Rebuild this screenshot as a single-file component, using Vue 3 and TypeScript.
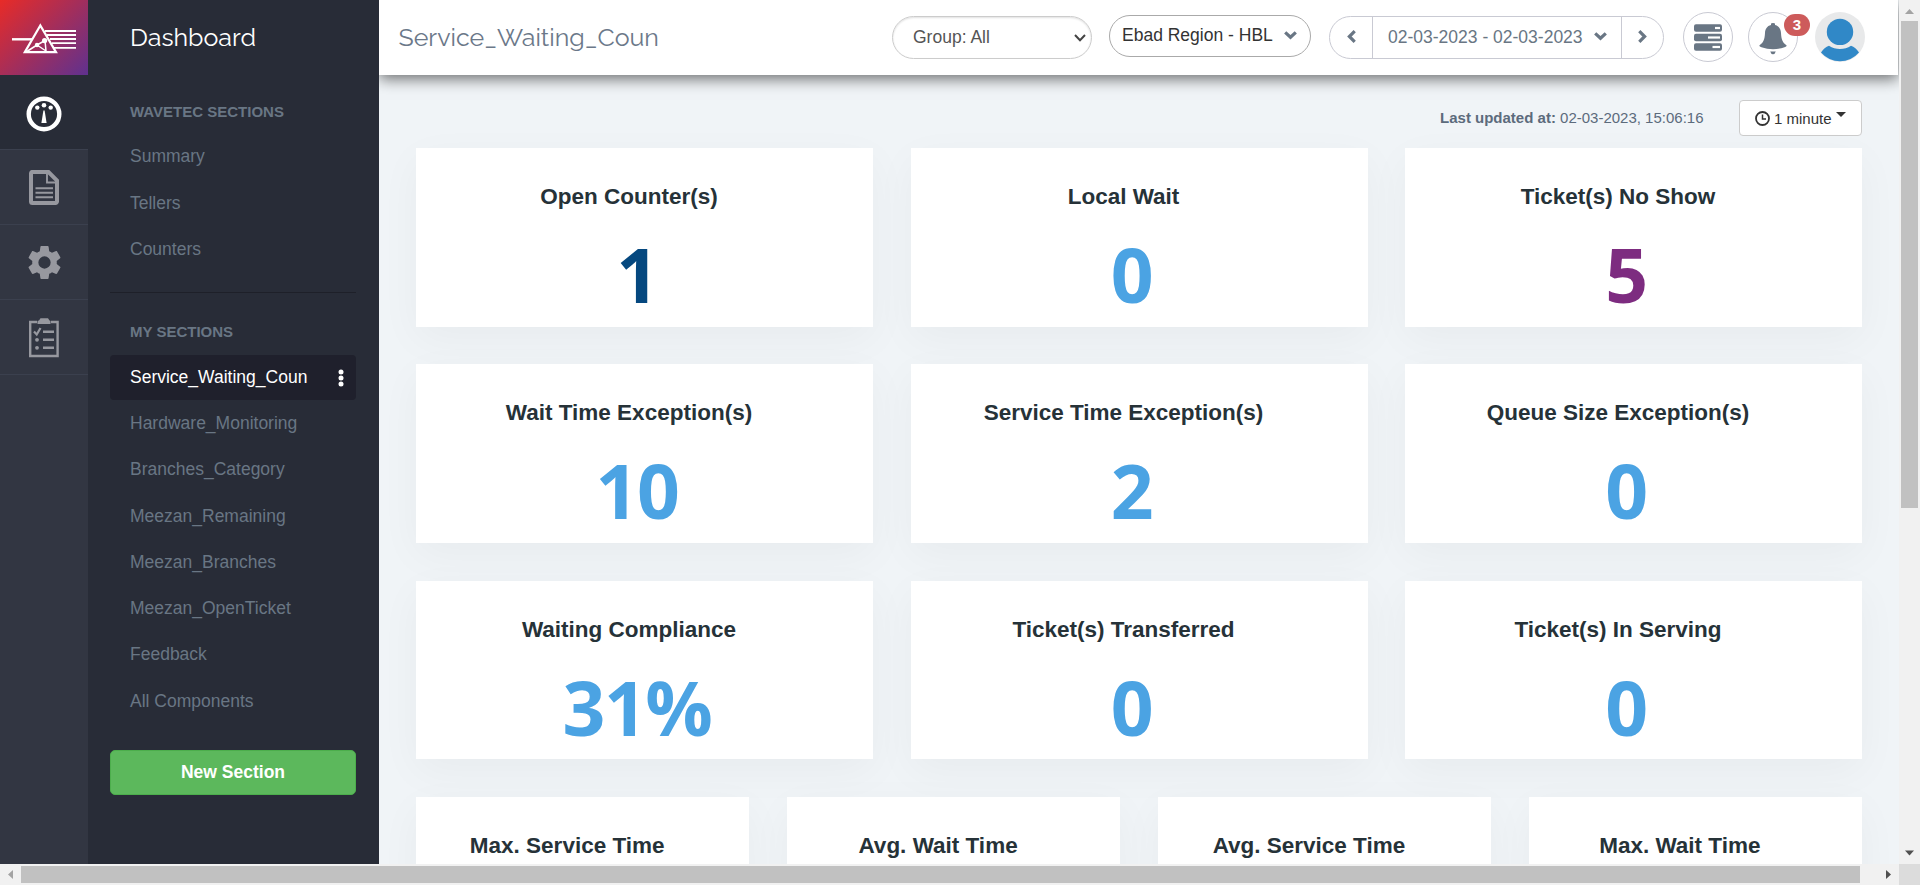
<script setup lang="ts">
interface Stat {
  label: string
  value: string
  tone?: string
}

const systemSections: string[] = ['Summary', 'Tellers', 'Counters']
const mySections: string[] = [
  'Service_Waiting_Coun',
  'Hardware_Monitoring',
  'Branches_Category',
  'Meezan_Remaining',
  'Meezan_Branches',
  'Meezan_OpenTicket',
  'Feedback',
  'All Components',
]
const activeSection = 'Service_Waiting_Coun'

const stats: Stat[] = [
  { label: 'Open Counter(s)', value: '1', tone: 'navy' },
  { label: 'Local Wait', value: '0' },
  { label: 'Ticket(s) No Show', value: '5', tone: 'purple' },
  { label: 'Wait Time Exception(s)', value: '10' },
  { label: 'Service Time Exception(s)', value: '2' },
  { label: 'Queue Size Exception(s)', value: '0' },
  { label: 'Waiting Compliance', value: '31%' },
  { label: 'Ticket(s) Transferred', value: '0' },
  { label: 'Ticket(s) In Serving', value: '0' },
]
const times: string[] = ['Max. Service Time', 'Avg. Wait Time', 'Avg. Service Time', 'Max. Wait Time']
</script>

<template>
  <div class="window">
    <div class="page">
      <nav class="rail">
        <div class="brand">
          <svg width="88" height="75" viewBox="0 0 88 75" fill="none" stroke="#fff">
            <path d="M12 39.3H32" stroke-width="2.4" />
            <path d="M45 31H76M47 35H76M50 39H76M52 43.2H76M54 47.8H76" stroke-width="1.8" />
            <path d="M40.3 25.5L24.8 52.2H56Z" stroke-width="2.2" />
            <path d="M26 52L37 45L45 40.5L46 51M37 45L46 51" stroke-width="1.5" />
            <circle cx="37" cy="45" r="2.2" fill="#fff" stroke="none" />
            <circle cx="44.6" cy="40.6" r="2.6" fill="#fff" stroke="none" />
          </svg>
        </div>
        <div class="rail-item current">
          <svg width="36" height="36" viewBox="0 0 36 36" fill="#fff">
            <circle cx="18" cy="18" r="15.3" fill="none" stroke="#fff" stroke-width="4.4" />
            <circle cx="11.3" cy="11.6" r="2.2" /><circle cx="18" cy="9.2" r="2.3" /><circle cx="24.7" cy="11.6" r="2.2" />
            <path d="M17.4 14.5h1.2L20.6 27h-5.2z" />
          </svg>
        </div>
        <div class="rail-item">
          <svg width="30" height="35" viewBox="0 0 30 35" fill="none" stroke="#97989f">
            <path d="M4 2H19.5L28 10.500V31.500A1.500 1.500 0 0 1 26.500 33H3.500A1.500 1.500 0 0 1 2 31.500V3.500A1.500 1.500 0 0 1 4 2Z" stroke-width="4" />
            <path d="M18 2V12.500H28M6.500 18.300H24M6.500 22.800H24M6.500 27.200H24" stroke-width="1.900" />
          </svg>
        </div>
        <div class="rail-item">
          <svg width="41" height="41" viewBox="0 0 24 24" fill="#97989f">
            <path d="M19.140 12.940c.04-.3.060-.610.060-.940 0-.320-.020-.640-.070-.940l2.030-1.580c.180-.140.230-.410.120-.610l-1.920-3.320c-.120-.220-.370-.290-.590-.220l-2.390.960c-.500-.380-1.030-.700-1.620-.940L14.400 2.810c-.040-.240-.240-.410-.480-.410h-3.840c-.240 0-.430.170-.470.410L9.250 5.350C8.660 5.590 8.120 5.920 7.630 6.290L5.240 5.330c-.220-.080-.470 0-.590.220L2.740 8.870c-.120.210-.080.470.120.610l2.030 1.580c-.050.300-.090.630-.090.940s.020.640.070.940l-2.030 1.580c-.180.140-.230.410-.120.610l1.920 3.320c.120.220.370.290.590.220l2.390-.960c.500.380 1.030.700 1.620.940l.360 2.540c.050.240.240.410.480.410h3.840c.240 0 .440-.170.470-.410l.360-2.540c.590-.240 1.130-.560 1.620-.940l2.390.960c.220.080.470 0 .590-.220l1.920-3.320c.120-.220.070-.470-.120-.610L19.140 12.940zM12 15.600a3.600 3.600 0 1 1 0-7.200 3.600 3.600 0 0 1 0 7.200z" />
          </svg>
        </div>
        <div class="rail-item">
          <svg width="30" height="40" viewBox="0 0 30 40" fill="none" stroke="#97989f">
            <path d="M8 4H1.200V38H28.600V4H22" stroke-width="2.400" />
            <path d="M8.500 6V3.500Q8.500 2.500 10 2.500L11.500 .3H19L20.500 2.500Q21.500 2.500 21.500 3.500V6Z" fill="#97989f" stroke="none" />
            <path d="M5 13.500L7.700 16.500L11.500 10" stroke-width="2.200" />
            <path d="M14 13.800H25M14 21.800H25M14 29.800H25" stroke-width="2.400" />
            <circle cx="8" cy="21.800" r="1.900" fill="#97989f" stroke="none" /><circle cx="8" cy="29.800" r="1.900" fill="#97989f" stroke="none" />
          </svg>
        </div>
      </nav>

      <aside class="sidebar">
        <h1>Dashboard</h1>
        <h2>WAVETEC SECTIONS</h2>
        <ul>
          <li v-for="name in systemSections" :key="name">{{ name }}</li>
        </ul>
        <hr />
        <h2 class="mine">MY SECTIONS</h2>
        <ul>
          <li v-for="name in mySections" :key="name" :class="{ active: name === activeSection }">
            <span>{{ name }}</span>
            <svg v-if="name === activeSection" width="6" height="18" viewBox="0 0 6 18" fill="#fff">
              <circle cx="3" cy="3" r="2.500" /><circle cx="3" cy="9" r="2.500" /><circle cx="3" cy="15" r="2.500" />
            </svg>
          </li>
        </ul>
        <button class="new-section">New Section</button>
      </aside>

      <main>
        <header>
          <div class="title">Service_Waiting_Coun</div>
          <div class="pill group">
            <span>Group: All</span>
            <svg width="12" height="8" viewBox="0 0 12 8" fill="none" stroke="#444" stroke-width="2"><path d="M1 1L6 6.200L11 1" /></svg>
          </div>
          <div class="pill region">
            <span>Ebad Region - HBL</span>
            <svg width="13" height="9" viewBox="0 0 13 9" fill="none" stroke="#697684" stroke-width="3.200"><path d="M1.200 1.300L6.500 6.200L11.800 1.300" /></svg>
          </div>
          <div class="pill range">
            <div class="step prev">
              <svg width="9" height="13" viewBox="0 0 9 13" fill="none" stroke="#697684" stroke-width="3.200"><path d="M7.700 1.200L2.400 6.500L7.700 11.800" /></svg>
            </div>
            <div class="dates">
              <span>02-03-2023 - 02-03-2023</span>
              <svg width="13" height="9" viewBox="0 0 13 9" fill="none" stroke="#697684" stroke-width="3.200"><path d="M1.200 1.300L6.500 6.200L11.800 1.300" /></svg>
            </div>
            <div class="step next">
              <svg width="9" height="13" viewBox="0 0 9 13" fill="none" stroke="#697684" stroke-width="3.200"><path d="M1.300 1.200L6.600 6.500L1.300 11.800" /></svg>
            </div>
          </div>
          <div class="round">
            <svg width="28" height="27" viewBox="0 0 28 27">
              <g fill="#697684"><rect width="28" height="7.400" y="0.300" rx="2" /><rect width="28" height="7.400" y="9.800" rx="2" /><rect width="28" height="7.400" y="19.300" rx="2" /></g>
              <g fill="#fff"><rect x="21" y="2.900" width="5" height="2.200" /><rect x="14" y="12.400" width="12" height="2.200" /><rect x="18.500" y="21.900" width="7.500" height="2.200" /></g>
            </svg>
          </div>
          <div class="round bell">
            <svg width="28" height="32" viewBox="0 0 28 32" fill="#697684">
              <path d="M12 2V.8Q12 0 14 0T16 .8V2C20 3 21.800 6 22 10C22.300 16.500 23.500 19.500 27.700 22.500Q27.700 23.500 25.500 24.300Q20 26.200 14 26.200T2.500 24.300Q.3 23.500 .3 22.500C4.500 19.500 5.700 16.500 6 10C6.200 6 8 3 12 2ZM11.200 28.600H16.800Q16 31.300 14 31.300T11.200 28.600Z" />
            </svg>
            <b class="badge">3</b>
          </div>
          <svg class="avatar" width="50" height="50" viewBox="0 0 50 50">
            <circle cx="25" cy="25" r="25" fill="#e8e9ea" />
            <g fill="#3088c7"><ellipse cx="25" cy="19.900" rx="13.200" ry="13.200" /><path d="M6 40.500C8 37.500 11 34.500 14 33.700Q19 37 25 37T36 33.700C39 34.500 42 37.500 44 40.500A25 25 0 0 1 6 40.500Z" /></g>
          </svg>
        </header>

        <div class="status">
          <p><b>Last updated at:</b> 02-03-2023, 15:06:16</p>
          <button class="refresh">
            <svg width="15" height="15" viewBox="0 0 15 15" fill="none" stroke="#333"><circle cx="7.500" cy="7.500" r="6.500" stroke-width="1.800" /><path d="M7.500 3.500V8H11" stroke-width="1.500" /></svg>
            <span>1 minute</span>
            <i class="caret"></i>
          </button>
        </div>

        <section class="cards">
          <article v-for="s in stats" :key="s.label" class="card">
            <h3>{{ s.label }}</h3>
            <div class="value" :class="s.tone">{{ s.value }}</div>
          </article>
        </section>
        <section class="cards four">
          <article v-for="t in times" :key="t" class="card">
            <h3>{{ t }}</h3>
          </article>
        </section>
      </main>
    </div>

    <div class="vbar">
      <svg width="21" height="21" viewBox="0 0 21 21" fill="#a3a3a3"><path d="M6 14L10.500 9L15 14Z" /></svg>
      <div class="vthumb"></div>
      <svg width="21" height="21" viewBox="0 0 21 21" fill="#505050"><path d="M6 7.500L10.500 12.500L15 7.500Z" /></svg>
    </div>
    <div class="hbar">
      <svg width="21" height="21" viewBox="0 0 21 21" fill="#a3a3a3"><path d="M13 6L8 10.500L13 15Z" /></svg>
      <div class="hthumb"></div>
      <svg width="21" height="21" viewBox="0 0 21 21" fill="#505050"><path d="M8 6L13 10.500L8 15Z" /></svg>
    </div>
    <div class="corner"></div>
  </div>
</template>

<style>
html,
body {
  overflow: hidden;
}
</style>

<style scoped>
* {
  box-sizing: border-box;
}
.window {
  width: 1920px;
  height: 885px;
  display: grid;
  grid-template: 864px 21px / 1899px 21px;
  overflow: hidden;
  font-family: "Liberation Sans", Arial, sans-serif;
}
.window svg {
  display: block;
  flex: none;
}
.page {
  display: flex;
  overflow: hidden;
  background: #f0f4f7;
}
h1, h2, h3, p, ul {
  margin: 0;
  padding: 0;
}
.rail {
  width: 88px;
  flex: none;
  background: #323642;
}
.brand {
  height: 75px;
  background: linear-gradient(135deg, #e82b27 0%, #5f318f 100%);
}
.rail-item {
  height: 75px;
  display: flex;
  align-items: center;
  justify-content: center;
  padding-top: 1px;
  border-bottom: 1px solid #3b404e;
}
.rail-item.current {
  background: #282c37;
  padding: 3px 1px 0 0;
}
.sidebar {
  position: relative;
  z-index: 1;
  width: 291px;
  flex: none;
  padding: 0 23px 0 22px;
  background: #282c37;
  color: #697684;
}
h1 {
  height: 75px;
  padding-left: 20px;
  font: 400 25px/75px Raleway, Lato, sans-serif;
  color: #fff;
}
h2 {
  height: 59.5px;
  padding: 27px 0 0 20px;
  font-size: 15px;
  line-height: 20px;
}
h2.mine {
  padding-top: 26px;
}
ul {
  list-style: none;
  display: flex;
  flex-direction: column;
  gap: 1.75px;
}
li {
  height: 44.5px;
  padding: 0 12px 0 20px;
  display: flex;
  align-items: center;
  justify-content: space-between;
  border-radius: 4px;
  font-size: 17.5px;
}
li.active {
  color: #fff;
  background: #1f202c;
}
li.active svg {
  margin-top: 2px;
}
hr {
  height: 1px;
  margin: 20px 0 3px;
  border: 0;
  background: #1e2029;
}
.new-section {
  display: block;
  width: 246px;
  height: 45px;
  margin-top: 27px;
  border: 1px solid #4cae4c;
  border-radius: 5px;
  background: #5cb85c;
  color: #fff;
  font: bold 17.5px "Liberation Sans", Arial, sans-serif;
}
main {
  width: 1520px;
  flex: none;
}
header {
  height: 75px;
  width: 1519px;
  padding: 12px 33px 0 19.5px;
  display: flex;
  align-items: flex-start;
  background: #fff;
  box-shadow: 0 4px 14px rgba(0, 0, 0, 0.55);
  color: #697684;
  font-size: 17.5px;
}
.title {
  flex: 1;
  font: 400 25px/50px Raleway, Lato, sans-serif;
  color: #6b7889;
}
.pill {
  height: 43px;
  display: flex;
  align-items: center;
  border: 1px solid #ccc;
  border-radius: 22px;
  margin-top: 4px;
}
.group {
  width: 200px;
  margin-right: 17px;
  padding: 0 5px 0 20px;
  justify-content: space-between;
  color: #555;
  box-shadow: inset 0 1px 2px rgba(0, 0, 0, 0.12);
}
.region {
  width: 202px;
  height: 42px;
  margin: 3px 18px 0 0;
  padding: 0 13px 2px 12px;
  justify-content: space-between;
  border-color: #aaa;
  color: #333;
}
.range {
  width: 335px;
  margin-right: 19px;
  border-color: #c9cad3;
}
.step {
  height: 100%;
  display: flex;
  align-items: center;
  justify-content: center;
  padding-bottom: 3px;
}
.prev {
  width: 42px;
}
.next {
  width: 41px;
}
.dates {
  flex: 1;
  height: 100%;
  padding: 0 14px 1px 15px;
  display: flex;
  align-items: center;
  justify-content: space-between;
  border: solid #c9cad3;
  border-width: 0 1px;
}
.dates svg {
  margin-bottom: 1px;
}
.round {
  position: relative;
  width: 50px;
  height: 50px;
  margin-right: 15px;
  display: flex;
  align-items: center;
  justify-content: center;
  border: 1px solid #c9cad3;
  border-radius: 50%;
}
.bell {
  padding-top: 3px;
  margin-right: 17px;
}
.badge {
  position: absolute;
  left: 35px;
  top: 1px;
  width: 26px;
  height: 22px;
  border-radius: 11px;
  background: #cd5b5b;
  color: #fff;
  font-size: 15px;
  line-height: 22px;
  text-align: center;
}
.status {
  height: 73px;
  padding: 25px 37px 0 0;
  display: flex;
  justify-content: flex-end;
  color: #5c6b7c;
  font-size: 15px;
}
.status p {
  margin-right: 35.5px;
  line-height: 36px;
}
.refresh {
  width: 123px;
  height: 36px;
  padding: 0 15px;
  display: flex;
  align-items: center;
  gap: 4px;
  border: 1px solid #ccc;
  border-radius: 4px;
  background: #fff;
  color: #333;
  font: 15px "Liberation Sans", Arial, sans-serif;
}
.caret {
  border: 5px solid transparent;
  border-top-color: #333;
  border-bottom: 0;
  margin-bottom: 7px;
}
.cards {
  margin: 0 37px 37.5px;
  display: grid;
  grid-template-columns: repeat(3, 1fr);
  grid-auto-rows: 178.75px;
  gap: 37.5px;
}
.cards.four {
  grid-template-columns: repeat(4, 1fr);
}
.card {
  padding: 33px 15px 0 0;
  text-align: center;
  background: #fff;
  box-shadow: 0 12px 40px rgba(0, 0, 0, 0.04);
}
h3 {
  margin-right: 16px;
  font-size: 22.5px;
  line-height: 32px;
  color: #263238;
}
.value {
  font-family: "Open Sans", "Noto Sans", sans-serif;
  font-size: 75px;
  line-height: 86px;
  font-weight: bold;
  letter-spacing: -1.5px;
  margin-top: 18px;
  color: #4ba3e3;
}
.navy {
  color: #05487f;
}
.purple {
  color: #7d2c80;
}
.vbar {
  display: flex;
  flex-direction: column;
  background: #f1f1f1;
}
.vthumb {
  width: 17px;
  height: 487px;
  margin: 0 2px auto;
  background: #c1c1c1;
}
.hbar {
  display: flex;
  justify-content: space-between;
  background: #f1f1f1;
}
.hthumb {
  width: 1839px;
  height: 17px;
  margin: 2px auto 0 0;
  background: #c1c1c1;
}
.corner {
  background: #dcdcdc;
}
</style>
